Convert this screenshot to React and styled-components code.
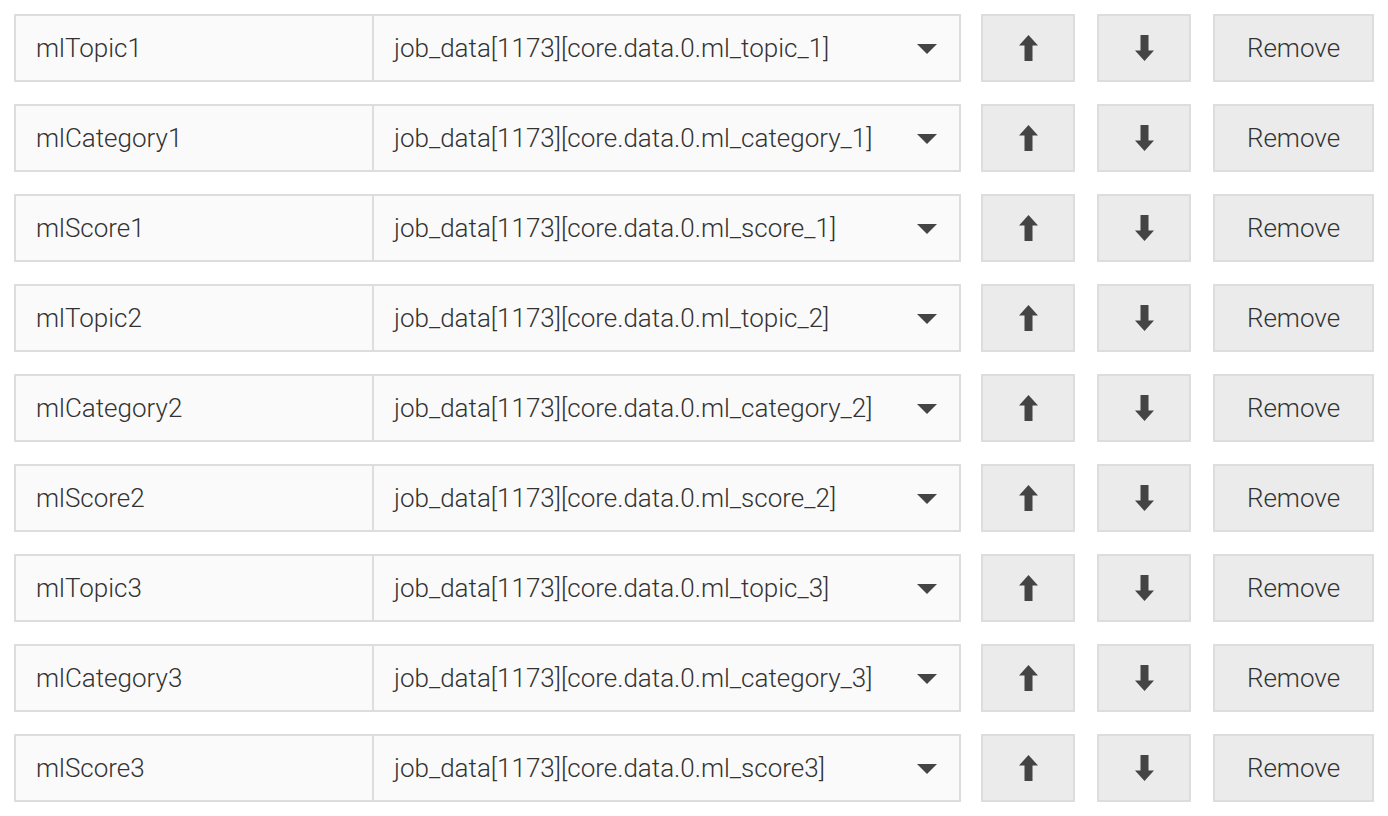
import React from 'react';
import styled, { createGlobalStyle } from 'styled-components';

const GlobalStyle = createGlobalStyle`
  html, body {
    margin: 0;
    padding: 0;
    background: #ffffff;
  }
  body {
    font-family: Roboto, "Liberation Sans", Arial, sans-serif;
    color: #444444;
  }
`;

const List = styled.div`
  display: flex;
  flex-direction: column;
  gap: 22px;
  padding: 14px 0 0 14px;
  width: 1360px;
`;

const Row = styled.div`
  display: flex;
  align-items: stretch;
  height: 68px;
`;

const Field = styled.div`
  display: flex;
  align-items: center;
  box-sizing: border-box;
  background: #fafafa;
  border: 2px solid #dddddd;
  padding: 0 20px;
  font-size: 26px;
  font-weight: 300;
  color: #333333;
  white-space: nowrap;
`;

const NameField = styled(Field)`
  width: 360px;
`;

const SelectField = styled(Field)`
  width: 587px;
  border-left: none;
  justify-content: space-between;
  padding-right: 22px;
`;

const Caret = styled.span`
  width: 0;
  height: 0;
  border-left: 10px solid transparent;
  border-right: 10px solid transparent;
  border-top: 10px solid #444444;
  margin-top: 1px;
`;

const Button = styled.button`
  display: flex;
  align-items: center;
  justify-content: center;
  box-sizing: border-box;
  width: ${p => p.$w}px;
  margin-left: ${p => p.$gap}px;
  background: #ebebeb;
  border: 2px solid #dddddd;
  border-radius: 0;
  padding: 0;
  font-family: inherit;
  font-size: 26px;
  font-weight: 300;
  color: #333333;
  cursor: pointer;
`;

const ArrowIcon = ({ down }) => (
  <svg width="19" height="26" viewBox="0 0 19 26" style={down ? { transform: 'rotate(180deg)' } : undefined}>
    <path d="M9.5 0 L19 10.5 L13.5 10.5 L13.5 26 L5.5 26 L5.5 10.5 L0 10.5 Z" fill="#444444" />
  </svg>
);

const rows = [
  ['mlTopic1', 'job_data[1173][core.data.0.ml_topic_1]'],
  ['mlCategory1', 'job_data[1173][core.data.0.ml_category_1]'],
  ['mlScore1', 'job_data[1173][core.data.0.ml_score_1]'],
  ['mlTopic2', 'job_data[1173][core.data.0.ml_topic_2]'],
  ['mlCategory2', 'job_data[1173][core.data.0.ml_category_2]'],
  ['mlScore2', 'job_data[1173][core.data.0.ml_score_2]'],
  ['mlTopic3', 'job_data[1173][core.data.0.ml_topic_3]'],
  ['mlCategory3', 'job_data[1173][core.data.0.ml_category_3]'],
  ['mlScore3', 'job_data[1173][core.data.0.ml_score3]'],
];

export default function App() {
  return (
    <>
      <GlobalStyle />
      <List>
        {rows.map(([name, path]) => (
          <Row key={name}>
            <NameField>{name}</NameField>
            <SelectField>
              <span>{path}</span>
              <Caret />
            </SelectField>
            <Button $w={94} $gap={20}><ArrowIcon /></Button>
            <Button $w={94} $gap={22}><ArrowIcon down /></Button>
            <Button $w={161} $gap={22}>Remove</Button>
          </Row>
        ))}
      </List>
    </>
  );
}
